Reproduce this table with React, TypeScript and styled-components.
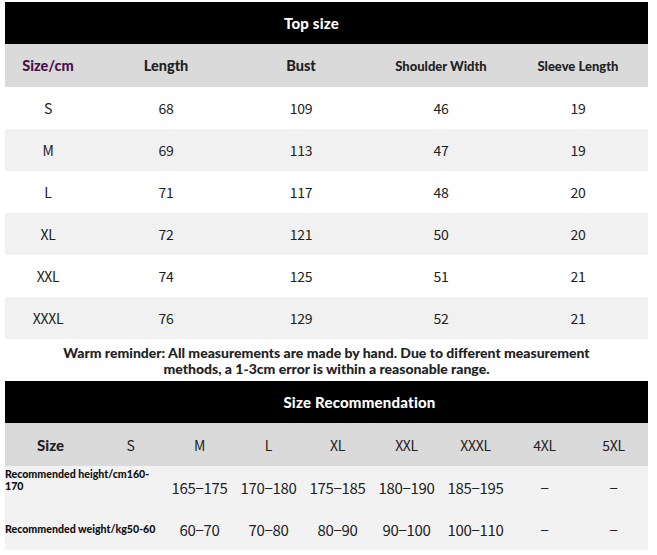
import React from 'react';
import styled, { createGlobalStyle } from 'styled-components';

const GlobalStyle = createGlobalStyle`
  html, body {
    margin: 0;
    padding: 0;
    background: #ffffff;
  }
`;

const Page = styled.div`
  width: 657px;
  height: 555px;
  padding: 2px 9px 0 5px;
  box-sizing: border-box;
  background: #fff;
  display: flex;
  flex-direction: column;
`;

const TitleBar = styled.div<{ $h: number; $shift: number }>`
  height: ${p => p.$h}px;
  background: #000;
  color: #fff;
  display: flex;
  align-items: center;
  justify-content: center;
  padding-left: ${p => Math.max(0, p.$shift * 2)}px;
  padding-right: ${p => Math.max(0, -p.$shift * 2)}px;
  font-family: Lato, 'Open Sans', sans-serif;
  font-weight: 900;
  font-size: 15px;
  letter-spacing: 0.2px;
`;

const Grid = styled.div<{ $cols: string; $h: number; $bg: string }>`
  display: grid;
  grid-template-columns: ${p => p.$cols};
  height: ${p => p.$h}px;
  background: ${p => p.$bg};
  align-items: center;
`;

const HeadCell = styled.div<{ $color?: string; $size?: number }>`
  text-align: center;
  font-family: Lato, 'Open Sans', sans-serif;
  font-weight: 900;
  font-size: ${p => p.$size ?? 14}px;
  color: ${p => p.$color ?? '#222'};
`;

const Cell = styled.div<{ $size?: number }>`
  text-align: center;
  font-family: 'Noto Sans CJK SC', sans-serif;
  font-size: ${p => p.$size ?? 14}px;
  color: #222;
  letter-spacing: -0.3px;
`;

const Label = styled.div<{ $raise?: number }>`
  grid-column: span 2;
  font-family: Lato, 'Open Sans', sans-serif;
  font-weight: 900;
  font-size: 10.6px;
  line-height: 12px;
  color: #111;
  white-space: nowrap;
  margin-bottom: ${p => p.$raise ?? 0}px;
`;

const Note = styled.div`
  height: 41px;
  display: flex;
  align-items: center;
  justify-content: center;
  text-align: center;
  font-family: Lato, 'Open Sans', sans-serif;
  font-weight: 900;
  font-size: 14px;
  line-height: 15.5px;
  color: #222;
  padding-top: 1px;
  white-space: nowrap;
`;

const topCols = '86px 150px 120px 160px 114px 13px';
const recCols = '91px repeat(8, 69px)';

const topHead = ['Length', 'Bust', 'Shoulder Width', 'Sleeve Length'];
const topRows = [
  ['S', '68', '109', '46', '19'],
  ['M', '69', '113', '47', '19'],
  ['L', '71', '117', '48', '20'],
  ['XL', '72', '121', '50', '20'],
  ['XXL', '74', '125', '51', '21'],
  ['XXXL', '76', '129', '52', '21'],
];

const recSizes = ['S', 'M', 'L', 'XL', 'XXL', 'XXXL', '4XL', '5XL'];
const recRows = [
  { label: ['Recommended height/cm160-', '170'], vals: ['165−175', '170−180', '175−185', '180−190', '185−195', '−', '−'], raise: 14 },
  { label: ['Recommended weight/kg50-60'], vals: ['60−70', '70−80', '80−90', '90−100', '100−110', '−', '−'], raise: 0 },
];

export default function App() {
  return (
    <>
      <GlobalStyle />
      <Page>
        <TitleBar $h={42} $shift={-15}>Top size</TitleBar>
        <Grid $cols={topCols} $h={43} $bg="#dadada">
          <HeadCell $color="#4a1248" $size={14.5}>Size/cm</HeadCell>
          {topHead.map((h, i) => (
            <HeadCell key={h} $size={i > 1 ? 13 : 14.5}>{h}</HeadCell>
          ))}
        </Grid>
        {topRows.map((row, i) => (
          <Grid key={row[0]} $cols={topCols} $h={42} $bg={i % 2 ? '#f1f1f1' : '#ffffff'}>
            {row.map((v, j) => (
              <Cell key={j}>{v}</Cell>
            ))}
          </Grid>
        ))}
        <Note>
          Warm reminder: All measurements are made by hand. Due to different measurement
          <br />
          methods, a 1-3cm error is within a reasonable range.
        </Note>
        <TitleBar $h={42} $shift={33}>Size Recommendation</TitleBar>
        <Grid $cols={recCols} $h={43} $bg="#dadada">
          <HeadCell $size={15}>Size</HeadCell>
          {recSizes.map(s => (
            <Cell key={s}>{s}</Cell>
          ))}
        </Grid>
        {recRows.map(r => (
          <Grid key={r.label[0]} $cols={recCols} $h={42} $bg="#f2f2f2">
            <Label $raise={r.raise}>
              {r.label.map((line, k) => (
                <React.Fragment key={k}>
                  {k > 0 && <br />}
                  {line}
                </React.Fragment>
              ))}
            </Label>
            {r.vals.map((v, j) => (
              <Cell key={j} $size={15}>{v}</Cell>
            ))}
          </Grid>
        ))}
      </Page>
    </>
  );
}
